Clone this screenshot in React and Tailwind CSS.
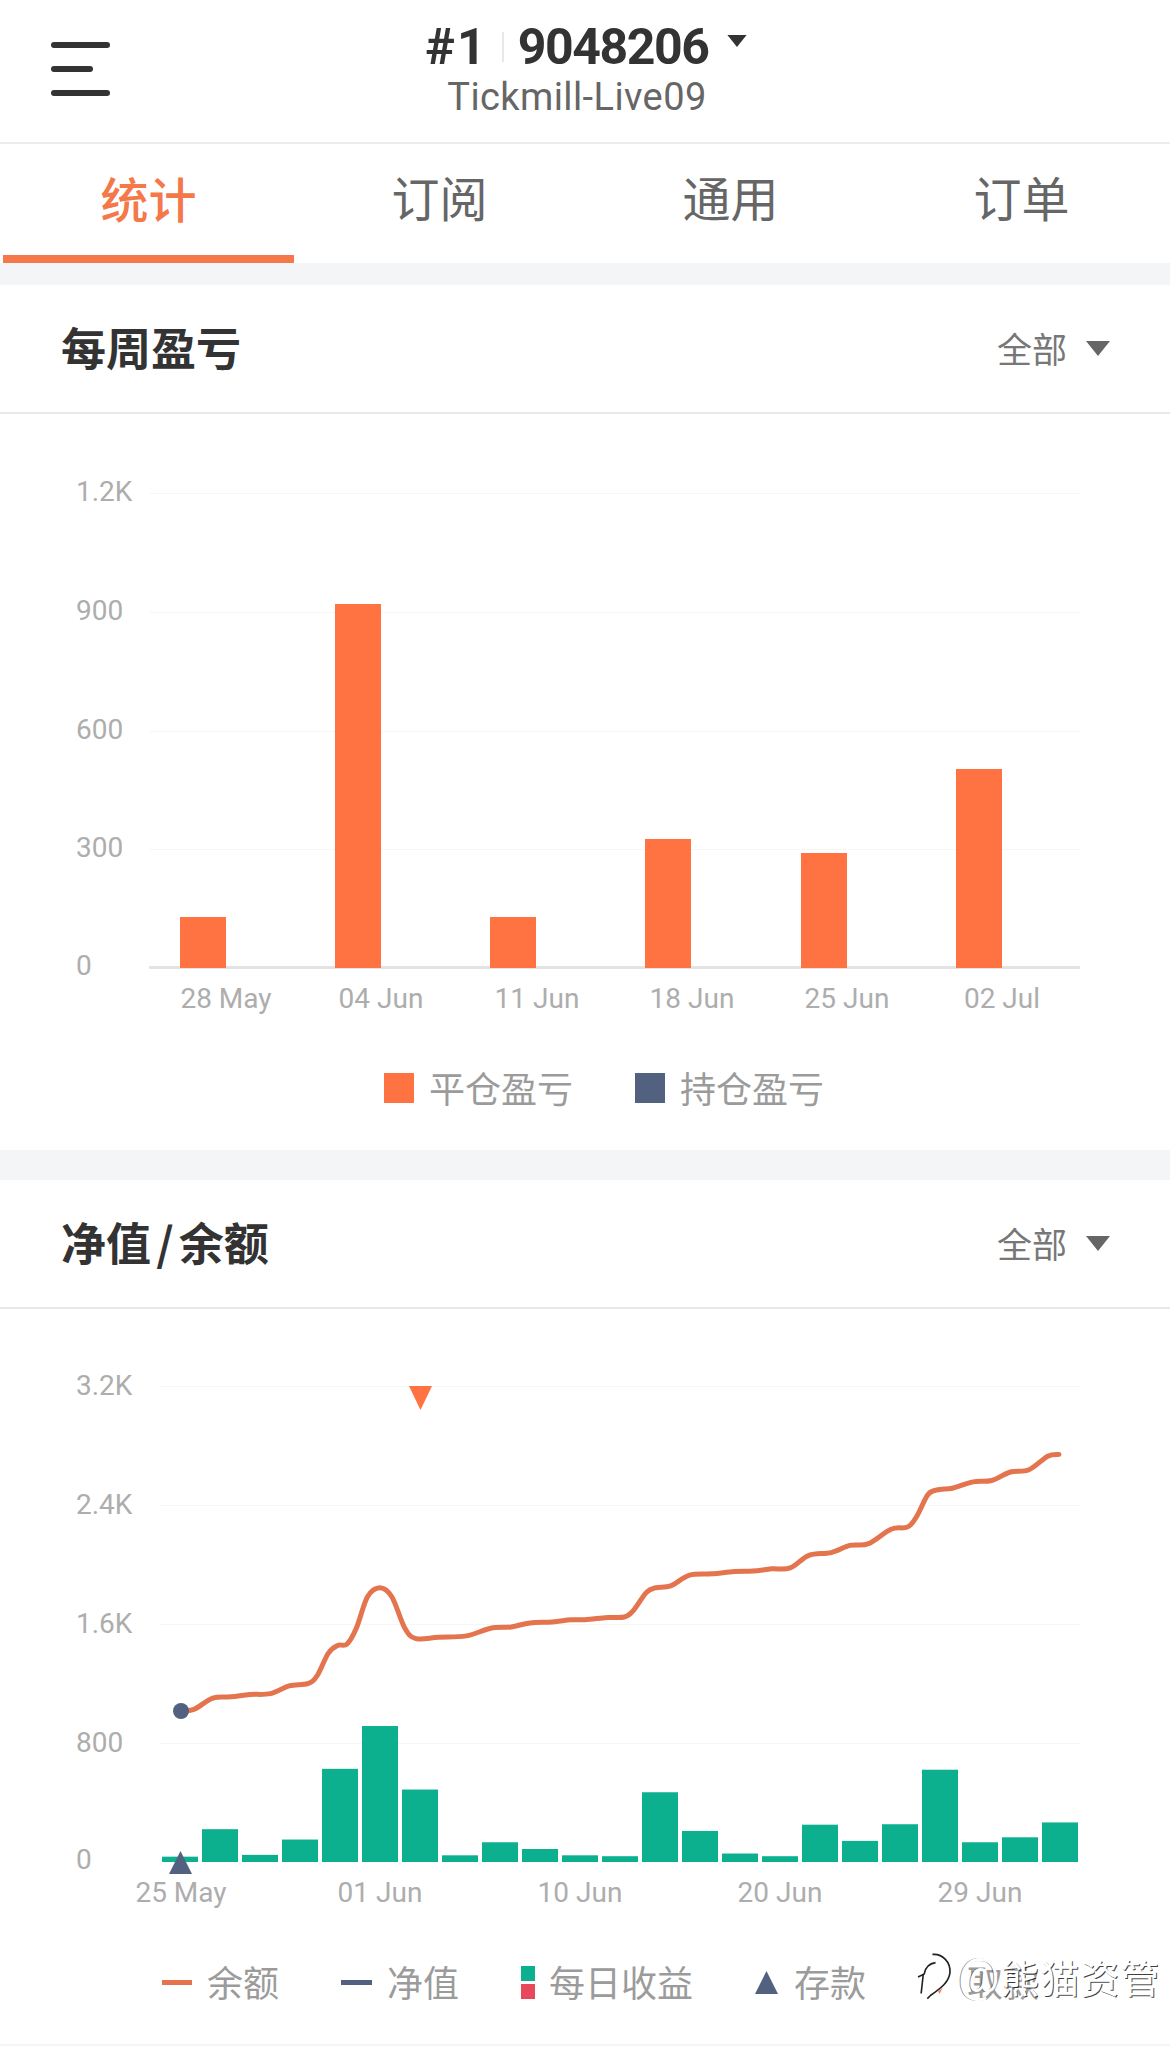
const CJK = "font-['Noto_Sans_CJK_SC','Noto_Sans',sans-serif]";
const ORANGE = '#ff7241';
const LINE = '#e4744e';
const NAVY = '#526180';
const GREEN = '#0cb08e';

const rawA = [[485,824],[520,820],[570,795],[620,792],[670,787],[725,785],[775,768],[825,763],[850,745],[880,695],[905,678],[930,675],[955,640],[985,570],[1018,550],[1050,570],[1085,640],[1115,663],[1175,660],[1250,657],[1315,640],[1370,637],[1420,628],[1480,626],[1530,621]];
const rawB = [[0,621],[60,616],[105,615],[130,600],[165,560],[190,550],[230,546],[280,522],[340,519],[400,514],[450,513],[500,508],[550,506],[600,478],[660,472],[710,456],[760,452],[820,420],[865,415],[890,390],[920,342],[950,332],[985,329],[1040,315],[1090,312],[1140,293],[1190,288],[1240,258],[1270,254]];
const linePts = [
  ...rawA.map(([x, y]) => [x / 2.68, 1340 + y / 2.22]),
  ...rawB.map(([x, y]) => [585 + x / 2.68, 1340 + y / 2.22]),
];

function smooth(pts) {
  let d = `M${pts[0][0].toFixed(1)} ${pts[0][1].toFixed(1)}`;
  for (let i = 0; i < pts.length - 1; i++) {
    const p0 = pts[Math.max(i - 1, 0)];
    const p1 = pts[i];
    const p2 = pts[i + 1];
    const p3 = pts[Math.min(i + 2, pts.length - 1)];
    const c1 = [p1[0] + (p2[0] - p0[0]) / 6, p1[1] + (p2[1] - p0[1]) / 6];
    const c2 = [p2[0] - (p3[0] - p1[0]) / 6, p2[1] - (p3[1] - p1[1]) / 6];
    d += `C${c1[0].toFixed(1)} ${c1[1].toFixed(1)} ${c2[0].toFixed(1)} ${c2[1].toFixed(1)} ${p2[0].toFixed(1)} ${p2[1].toFixed(1)}`;
  }
  return d;
}

const weeklyBars = [
  { x: 180, top: 917 },
  { x: 335, top: 604 },
  { x: 490, top: 917 },
  { x: 645, top: 839 },
  { x: 801, top: 853 },
  { x: 956, top: 769 },
];
const weeklyGrid = [[493, 491, '1.2K'], [612, 610, '900'], [731, 729, '600'], [849, 847, '300'], [965, 965, '0']];
const weeklyX = [[226, '28 May'], [381, '04 Jun'], [537, '11 Jun'], [692, '18 Jun'], [847, '25 Jun'], [1002, '02 Jul']];

const dailyTops = [1147,1086,1143,1109,952,857,998,1144,1115,1130,1144,1146,1004,1090,1140,1146,1076,1112,1075,954,1115,1104,1071];
const equityGrid = [[1386, 1385, '3.2K'], [1505, 1504, '2.4K'], [1624, 1623, '1.6K'], [1743, 1742, '800'], [1862, 1859, '0']];
const equityX = [[181, '25 May'], [380, '01 Jun'], [580, '10 Jun'], [780, '20 Jun'], [980, '29 Jun']];

const axisText = "fill-[#adadad] font-['Roboto',sans-serif] text-[28px]";

function Caret({ className }) {
  return (
    <svg viewBox="0 0 24 15" className={className}>
      <path d="M0 0H24L12 15Z" fill="currentColor" />
    </svg>
  );
}

function SectionTitle({ title }) {
  return (
    <div className="flex h-[129px] items-center justify-between border-b-2 border-[#e9e9e9] pl-[61px] pr-[60px]">
      <span className={`${CJK} mb-[5px] text-[45px] leading-none font-bold text-[#333333] [word-spacing:-5px]`}>{title}</span>
      <div className="flex items-center gap-[19px] text-[#777777]">
        <span className={`${CJK} mb-[2px] text-[35px] leading-none`}>全部</span>
        <Caret className="h-[15px] w-[24px] text-[#666666]" />
      </div>
    </div>
  );
}

function LegendText({ children }) {
  return <span className={`${CJK} pb-[2px] text-[36px] leading-[30px] text-[#9b9b9b]`}>{children}</span>;
}

function WeeklyChart() {
  return (
    <svg viewBox="0 414 1170 616" className="block h-[616px] w-full">
      {weeklyGrid.slice(0, 4).map(([y]) => (
        <rect key={y} x="150" y={y} width="930" height="1" fill="#f6f6f6" />
      ))}
      <rect x="149" y="966" width="931" height="3" fill="#e3e3e3" />
      {weeklyGrid.map(([, y, t]) => (
        <text key={t} x="76" y={y} dominantBaseline="central" className={axisText}>{t}</text>
      ))}
      {weeklyBars.map((b) => (
        <rect key={b.x} x={b.x} y={b.top} width="46" height={968 - b.top} fill={ORANGE} />
      ))}
      {weeklyX.map(([x, t]) => (
        <text key={t} x={x} y="998" textAnchor="middle" dominantBaseline="central" className={axisText}>{t}</text>
      ))}
    </svg>
  );
}

function EquityChart() {
  return (
    <svg viewBox="0 1309 1170 631" className="block h-[631px] w-full">
      {equityGrid.slice(0, 4).map(([y]) => (
        <rect key={y} x="160" y={y} width="920" height="1" fill="#f6f6f6" />
      ))}
      {equityGrid.map(([, y, t]) => (
        <text key={t} x="76" y={y} dominantBaseline="central" className={axisText}>{t}</text>
      ))}
      {dailyTops.map((top, i) => {
        const y = 1340 + top / 2.22;
        return <rect key={i} x={162 + i * 40} y={y} width="36" height={1862 - y} fill={GREEN} />;
      })}
      <path d={smooth(linePts)} fill="none" stroke={LINE} strokeWidth="5" strokeLinecap="round" strokeLinejoin="round" />
      <ellipse cx="181" cy="1711" rx="8" ry="8" fill={NAVY} />
      <path d="M409 1386H432L420.5 1410Z" fill={ORANGE} />
      <path d="M180.5 1851L192 1874H169Z" fill={NAVY} />
      {equityX.map(([x, t]) => (
        <text key={t} x={x} y="1892" textAnchor="middle" dominantBaseline="central" className={axisText}>{t}</text>
      ))}
    </svg>
  );
}

function Watermark() {
  return (
    <div className="absolute left-[916px] top-[1950px] flex items-center">
      <svg viewBox="0 0 36 50" className="h-[52px] w-[37px]">
        <path d="M20 4C32 4 36 14 34 24C32 34 22 40 12 46C8 44 6 30 4 24C2 14 10 4 20 4Z" fill="#ffffff" />
        <path d="M2 26L8 23C9 17 12 13 19 12M7 24L5 42M16 4C26 3 34 12 33 22C32 31 24 37 14 44L11 47" fill="none" stroke="#222222" strokeWidth="1.6" />
      </svg>
      <span className="ml-[5px] font-['Roboto',sans-serif] text-[46px] leading-none text-white [text-shadow:-1px_0_0_rgba(0,0,0,0.45)]">@</span>
      <span className={`${CJK} ml-[1px] text-[39px] leading-none tracking-[1px] text-white [text-shadow:1px_1px_0_rgba(0,0,0,0.75)]`}>熊猫资管</span>
    </div>
  );
}

export default function App() {
  return (
    <div className="relative h-[2046px] w-[1170px] overflow-hidden bg-white">
      <header className="relative flex h-[144px] flex-col items-center border-b-2 border-[#ececec]">
        <div className="absolute left-[51px] top-[42px] flex flex-col gap-[18px]">
          <span className="block h-[6px] w-[59px] rounded-full bg-[#333333]" />
          <span className="block h-[6px] w-[42px] rounded-full bg-[#333333]" />
          <span className="block h-[6px] w-[59px] rounded-full bg-[#333333]" />
        </div>
        <div className="flex h-[78px] items-center pl-[2px] pt-[16px] font-['Roboto',sans-serif] text-[50px] leading-none font-bold text-[#333333]">
          <span className="tracking-[2px]">#1</span>
          <span className="mx-[14px] h-[30px] w-[2px] bg-[#e8e8e8]" />
          <span className="tracking-[-1.4px]">9048206</span>
          <Caret className="mb-[12px] ml-[18px] h-[12px] w-[20px]" />
        </div>
        <div className="pr-[16px] font-['Roboto',sans-serif] text-[38px] leading-[38px] tracking-[0.4px] text-[#666666]">Tickmill-Live09</div>
      </header>

      <nav className={`${CJK} flex h-[119px] px-[3px] text-[48px] text-[#666666]`}>
        <div className="flex w-[291px] items-center justify-center border-b-[8px] border-[#f4784a] pb-[6px] font-medium text-[#f4784a]">统计</div>
        <div className="flex w-[291px] items-center justify-center pb-[16px]">订阅</div>
        <div className="flex w-[291px] items-center justify-center pb-[16px]">通用</div>
        <div className="flex w-[291px] items-center justify-center pb-[16px]">订单</div>
      </nav>
      <div className="h-[22px] bg-[#f4f5f7]" />

      <section>
        <SectionTitle title="每周盈亏" />
        <WeeklyChart />
        <div className="flex h-[120px] gap-[62px] pl-[384px] pt-[43px]">
          <div className="flex h-[30px] items-center gap-[15px]">
            <span className="block h-[30px] w-[30px]" style={{ background: ORANGE }} />
            <LegendText>平仓盈亏</LegendText>
          </div>
          <div className="flex h-[30px] items-center gap-[15px]">
            <span className="block h-[30px] w-[30px]" style={{ background: NAVY }} />
            <LegendText>持仓盈亏</LegendText>
          </div>
        </div>
      </section>
      <div className="h-[30px] bg-[#f4f5f7]" />

      <section>
        <SectionTitle title="净值 / 余额" />
        <EquityChart />
        <div className="flex h-[104px] gap-[62px] pl-[162px] pt-[27px]">
          <div className="flex h-[30px] items-center gap-[15px]">
            <span className="block h-[5px] w-[30px] bg-[#e4744e]" />
            <LegendText>余额</LegendText>
          </div>
          <div className="flex h-[30px] items-center gap-[15px]">
            <span className="block h-[5px] w-[31px] bg-[#526180]" />
            <LegendText>净值</LegendText>
          </div>
          <div className="flex h-[30px] items-center gap-[14px]">
            <span className="flex w-[14px] flex-col gap-[3px]">
              <span className="block h-[15px] bg-[#0cb08e]" />
              <span className="block h-[15px] bg-[#e8485c]" />
            </span>
            <LegendText>每日收益</LegendText>
          </div>
          <div className="flex h-[30px] items-center gap-[16px]">
            <svg viewBox="0 0 23 23" className="h-[23px] w-[23px]"><path d="M11.5 0L23 23H0Z" fill={NAVY} /></svg>
            <LegendText>存款</LegendText>
          </div>
          <div className="flex h-[30px] items-center gap-[16px]">
            <svg viewBox="0 0 23 23" className="h-[23px] w-[23px]"><path d="M0 0H23L11.5 23Z" fill={ORANGE} /></svg>
            <LegendText>取款</LegendText>
          </div>
        </div>
        <div className="h-[2px] bg-[#f4f5f7]" />
      </section>

      <Watermark />
    </div>
  );
}
